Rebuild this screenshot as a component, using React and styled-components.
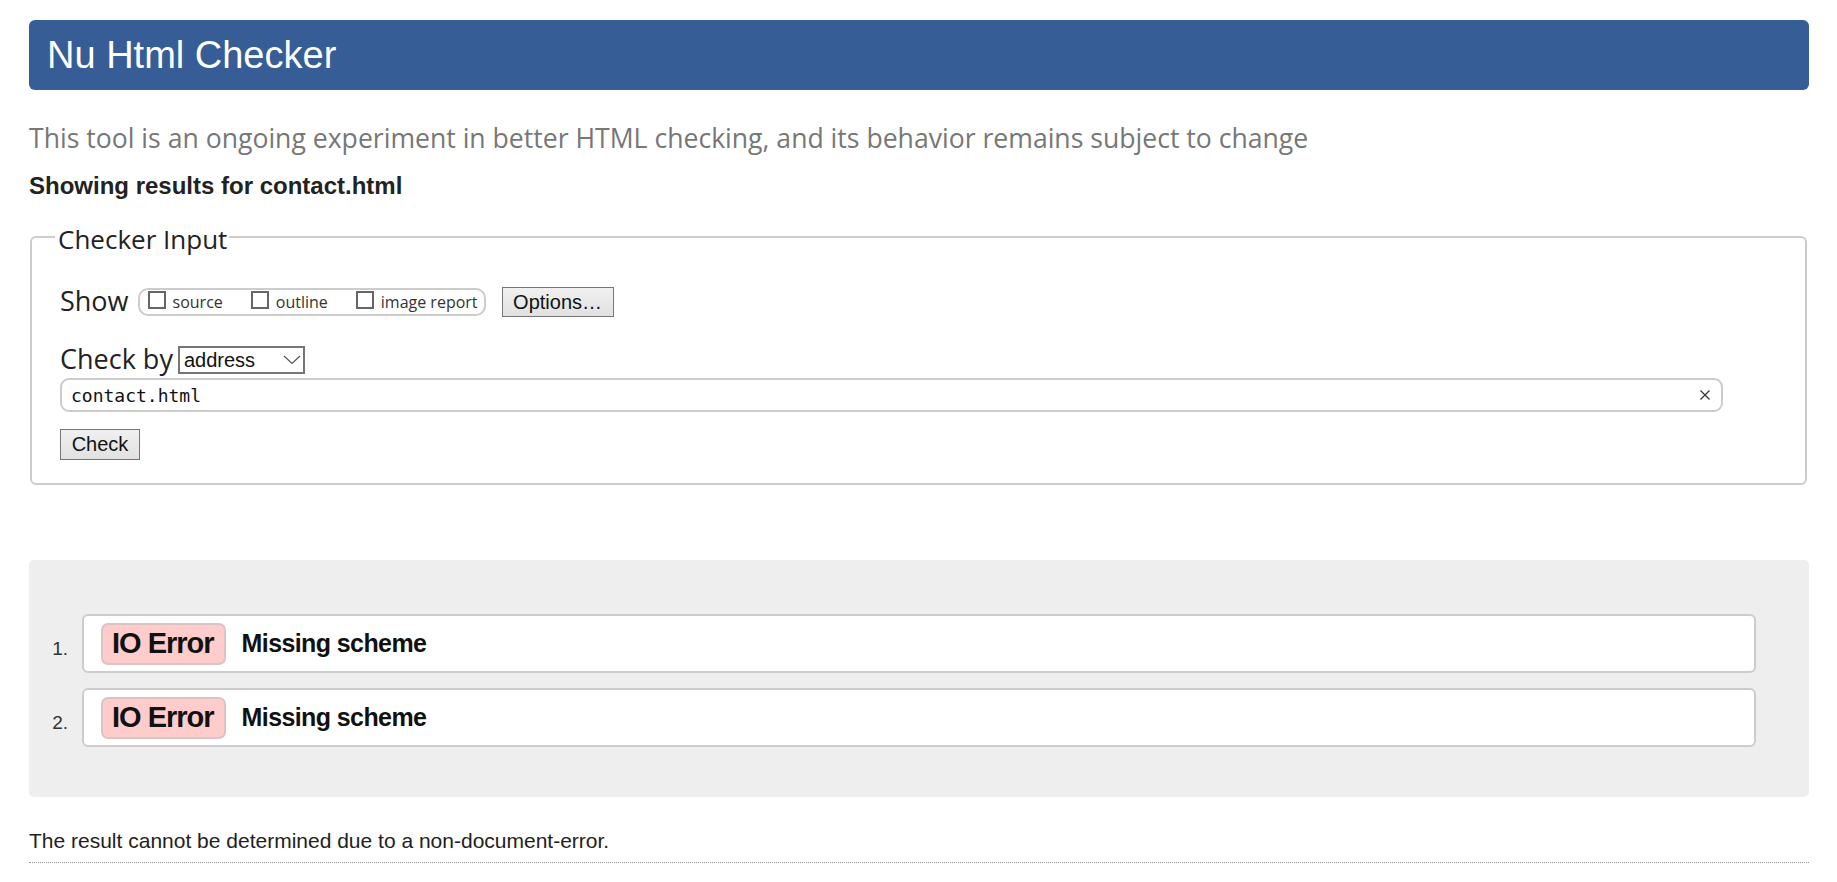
import React from 'react';
import styled, { createGlobalStyle } from 'styled-components';

const GlobalStyle = createGlobalStyle`
  html, body {
    margin: 0;
    padding: 0;
    background: #fff;
  }
  body {
    font-family: "Liberation Sans", Arial, sans-serif;
    color: #222;
  }
`;

const Page = styled.div`
  padding: 20px 28px 0 29px;
`;

const Header = styled.h1`
  margin: 0;
  height: 70px;
  display: flex;
  align-items: center;
  padding-left: 18px;
  background: #365d95;
  border-radius: 6px;
  color: #fff;
  font-size: 38px;
  font-weight: normal;
`;

const Intro = styled.p`
  margin: 32px 0 0;
  font-family: "Open Sans", sans-serif;
  font-size: 26.6px;
  line-height: 32px;
  color: #777;
`;

const ResultsFor = styled.p`
  margin: 18px 0 0;
  font-size: 24px;
  line-height: 28px;
  font-weight: bold;
`;

const Fieldset = styled.fieldset`
  margin: 22px 2px 0 1px;
  padding: 35px 28px 23px;
  border: 2px solid #ccc;
  border-radius: 6px;
  min-width: 0;
`;

const Legend = styled.legend`
  margin-left: -5px;
  padding: 4px 2px 0 3px;
  font-family: "Open Sans", sans-serif;
  font-size: 26px;
  line-height: 26px;
  color: #222;
`;

const Row = styled.div`
  display: flex;
  align-items: center;
  height: ${(p) => p.h}px;
  margin-top: ${(p) => p.gap || 0}px;
`;

const Label = styled.span`
  font-family: "Open Sans", sans-serif;
  font-size: 27px;
  line-height: 1;
  margin-bottom: 3px;
  color: #222;
`;

const ShowGroup = styled.div`
  display: flex;
  align-items: center;
  gap: 28px;
  height: 28px;
  box-sizing: border-box;
  margin-left: 9px;
  padding: 0 6px 0 8px;
  border: 2px solid #ccc;
  border-radius: 10px;
`;

const CheckItem = styled.label`
  display: flex;
  align-items: center;
  gap: 7px;
  font-family: "Open Sans", sans-serif;
  font-size: 16px;
  color: #333;
`;

const Box = styled.input`
  appearance: none;
  margin: 0 0 4px;
  width: 18px;
  height: 18px;
  box-sizing: border-box;
  border: 2px solid #666;
  background: #fff;
`;

const Button = styled.button`
  margin-left: ${(p) => p.offset || 0}px;
  width: ${(p) => p.w}px;
  height: ${(p) => p.h}px;
  padding: 0;
  border: 1px solid #767676;
  border-radius: 0;
  background: linear-gradient(#f0f0f0, #e1e1e1);
  font-family: "Liberation Sans", Arial, sans-serif;
  font-size: 20px;
  color: #111;
`;

const SelectWrap = styled.div`
  position: relative;
  margin-left: 5px;
  width: 127px;
  height: 28px;
`;

const Select = styled.select`
  appearance: none;
  width: 100%;
  height: 100%;
  margin: 0;
  padding: 0 0 0 4px;
  border: 2px solid #767676;
  border-radius: 0;
  background: #fff;
  font-family: "Liberation Sans", Arial, sans-serif;
  font-size: 20px;
  color: #111;
`;

const Chevron = styled.svg`
  position: absolute;
  right: 4px;
  top: 9px;
  pointer-events: none;
`;

const Field = styled.div`
  display: flex;
  align-items: center;
  width: 1663px;
  height: 34px;
  box-sizing: border-box;
  padding: 0 11px 0 9px;
  border: 2px solid #ccc;
  border-radius: 9px;
`;

const FieldInput = styled.input`
  flex: 1;
  border: 0;
  outline: none;
  padding: 0;
  font-family: "DejaVu Sans Mono", "Liberation Mono", monospace;
  font-size: 18px;
  color: #111;
  background: transparent;
`;

const Clear = styled.button`
  display: flex;
  padding: 0;
  border: 0;
  background: none;
`;

const Results = styled.ol`
  margin: 75px 0 0;
  padding: 54px 53px 50px 0;
  list-style: none;
  background: #eee;
  border-radius: 5px;
  display: flex;
  flex-direction: column;
  gap: 15px;
`;

const Item = styled.li`
  display: flex;
  align-items: center;
`;

const Num = styled.span`
  width: 53px;
  box-sizing: border-box;
  padding-right: 14px;
  margin-top: 11px;
  text-align: right;
  font-size: 19px;
  color: #333;
`;

const Card = styled.div`
  flex: 1;
  display: flex;
  align-items: center;
  height: 59px;
  box-sizing: border-box;
  padding-left: 17px;
  border: 2px solid #ccc;
  border-radius: 6px;
  background: #fff;
`;

const Badge = styled.strong`
  display: flex;
  align-items: center;
  height: 42px;
  box-sizing: border-box;
  padding: 0 10px 0 9px;
  border: 2px solid #dcc4c4;
  border-radius: 7px;
  background: #ffcccc;
  font-size: 29px;
  letter-spacing: -1px;
  color: #111;
`;

const Message = styled.span`
  margin-left: 16px;
  font-size: 25px;
  letter-spacing: -0.6px;
  font-weight: bold;
  color: #111;
`;

const Footer = styled.p`
  margin: 32px 0 0;
  padding-bottom: 10px;
  font-size: 21px;
  line-height: 23px;
  color: #222;
  border-bottom: 1px dotted #999;
`;

const messages = [
  { type: 'IO Error', text: 'Missing scheme' },
  { type: 'IO Error', text: 'Missing scheme' },
];

export default function App() {
  return (
    <Page>
      <GlobalStyle />
      <Header>Nu Html Checker</Header>
      <Intro>
        This tool is an ongoing experiment in better HTML checking, and its behavior remains subject to change
      </Intro>
      <ResultsFor>Showing results for contact.html</ResultsFor>

      <Fieldset>
        <Legend>Checker Input</Legend>
        <Row h={30}>
          <Label>Show</Label>
          <ShowGroup>
            <CheckItem><Box type="checkbox" />source</CheckItem>
            <CheckItem><Box type="checkbox" />outline</CheckItem>
            <CheckItem><Box type="checkbox" />image report</CheckItem>
          </ShowGroup>
          <Button offset={16} w={112} h={30}>Options…</Button>
        </Row>
        <Row h={28} gap={29}>
          <Label>Check by</Label>
          <SelectWrap>
            <Select defaultValue="address">
              <option value="address">address</option>
              <option value="file">file upload</option>
              <option value="text">text input</option>
            </Select>
            <Chevron width="18" height="10" viewBox="0 0 18 10">
              <path d="M1 1 L9 8.5 L17 1" fill="none" stroke="#555" strokeWidth="1.2" />
            </Chevron>
          </SelectWrap>
        </Row>
        <Row h={34} gap={4}>
          <Field>
            <FieldInput type="text" defaultValue="contact.html" />
            <Clear type="button" aria-label="clear">
              <svg width="10" height="10" viewBox="0 0 10 10">
                <path d="M0.5 0.5 L9.5 9.5 M9.5 0.5 L0.5 9.5" stroke="#333" strokeWidth="1.2" />
              </svg>
            </Clear>
          </Field>
        </Row>
        <Row h={31} gap={17}>
          <Button w={80} h={31}>Check</Button>
        </Row>
      </Fieldset>

      <Results>
        {messages.map((m, i) => (
          <Item key={i}>
            <Num>{i + 1}.</Num>
            <Card>
              <Badge>{m.type}</Badge>
              <Message>{m.text}</Message>
            </Card>
          </Item>
        ))}
      </Results>

      <Footer>The result cannot be determined due to a non-document-error.</Footer>
    </Page>
  );
}
